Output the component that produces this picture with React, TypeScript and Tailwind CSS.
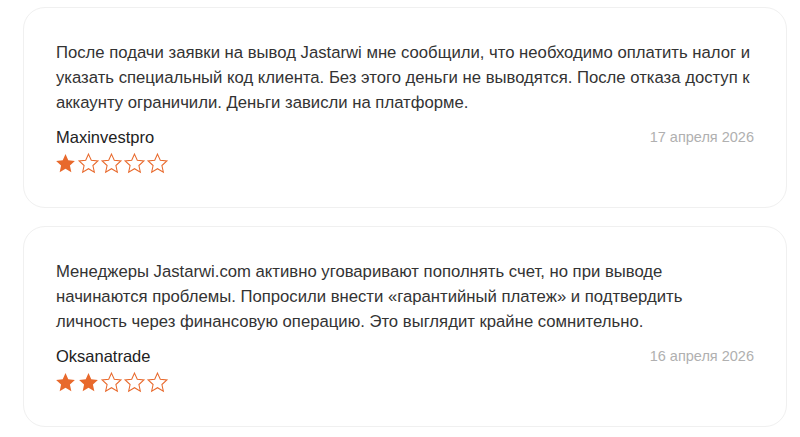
const reviews = [
  {
    text: 'После подачи заявки на вывод Jastarwi мне сообщили, что необходимо оплатить налог и указать специальный код клиента. Без этого деньги не выводятся. После отказа доступ к аккаунту ограничили. Деньги зависли на платформе.',
    author: 'Maxinvestpro',
    date: '17 апреля 2026',
    rating: 1,
  },
  {
    text: 'Менеджеры Jastarwi.com активно уговаривают пополнять счет, но при выводе начинаются проблемы. Попросили внести «гарантийный платеж» и подтвердить личность через финансовую операцию. Это выглядит крайне сомнительно.',
    author: 'Oksanatrade',
    date: '16 апреля 2026',
    rating: 2,
  },
];

function Star({ filled }: { filled: boolean }) {
  return (
    <svg width="23" height="23" viewBox="0 0 24 24" className="block">
      <polygon
        points="12,2.2 14.9,8.7 21.8,9.4 16.6,14.1 18.1,21 12,17.4 5.9,21 7.4,14.1 2.2,9.4 9.1,8.7"
        fill={filled ? '#e8692c' : 'none'}
        stroke="#e8692c"
        strokeWidth={filled ? 0 : 1.1}
        strokeLinejoin="miter"
      />
    </svg>
  );
}

export default function App() {
  return (
    <div className="min-h-[437px] bg-white pt-[7px] font-['Liberation_Sans',Arial,sans-serif]">
      <div className="ml-[23px] flex w-[764px] flex-col gap-[18px]">
        {reviews.map((r) => (
          <div
            key={r.author}
            className="rounded-[22px] border border-[#f0f0f0] bg-white pl-8 pr-[32px] pb-[32px] pt-[32px]"
          >
            <p className="pr-[3px] text-[16.7px] leading-[25px] text-[#333]">{r.text}</p>
            <div className="mt-[10px] flex items-center justify-between">
              <span className="text-[16.5px] leading-6 text-[#222]">{r.author}</span>
              <span className="text-[14.5px] leading-6 text-[#b0b0b0]">{r.date}</span>
            </div>
            <div className="mt-[2px] flex h-6 items-center gap-0 -ml-[2px]">
              {[1, 2, 3, 4, 5].map((i) => (
                <Star key={i} filled={i <= r.rating} />
              ))}
            </div>
          </div>
        ))}
      </div>
    </div>
  );
}
